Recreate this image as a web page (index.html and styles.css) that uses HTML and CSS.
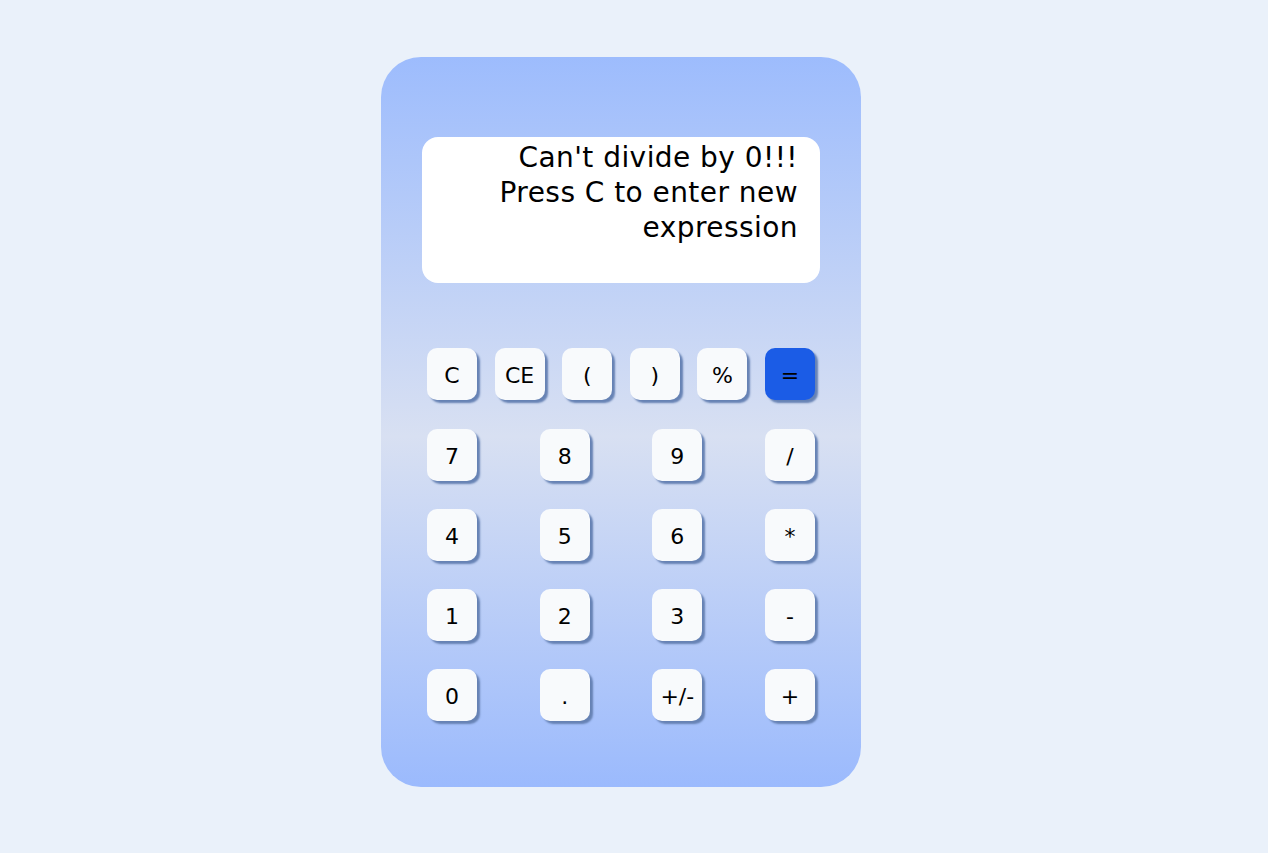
FILE: index.html
```html
<!DOCTYPE html>
<html>
<head>
<meta charset="utf-8">
<link rel="stylesheet" href="styles.css">
</head>
<body>
<div class="calc">
  <div class="display">Can't divide by 0!!!<br>Press C to enter new expression</div>
  <div class="keys">
    <div class="row first">
      <button class="key">C</button>
      <button class="key">CE</button>
      <button class="key">(</button>
      <button class="key">)</button>
      <button class="key">%</button>
      <button class="key eq">=</button>
    </div>
    <div class="row">
      <button class="key">7</button>
      <button class="key">8</button>
      <button class="key">9</button>
      <button class="key">/</button>
    </div>
    <div class="row">
      <button class="key">4</button>
      <button class="key">5</button>
      <button class="key">6</button>
      <button class="key">*</button>
    </div>
    <div class="row">
      <button class="key">1</button>
      <button class="key">2</button>
      <button class="key">3</button>
      <button class="key">-</button>
    </div>
    <div class="row">
      <button class="key">0</button>
      <button class="key">.</button>
      <button class="key">+/-</button>
      <button class="key">+</button>
    </div>
  </div>
</div>
</body>
</html>
```

FILE: styles.css
```css
html, body {
  margin: 0;
  padding: 0;
  background: #eaf1fa;
  font-family: "DejaVu Sans", "Liberation Sans", sans-serif;
}
body {
  padding-top: 57px;
  padding-left: 381px;
  height: 853px;
  box-sizing: border-box;
}
.calc {
  width: 480px;
  height: 730px;
  border-radius: 40px;
  background: linear-gradient(180deg, #9dbcfd 0%, #d8e0f2 52%, #9bbafd 100%);
  padding: 80px 41px 0 41px;
  box-sizing: border-box;
  display: flex;
  flex-direction: column;
}
.display {
  background: #ffffff;
  height: 146px;
  border-radius: 16px;
  box-sizing: border-box;
  padding: 3px 22px 0 22px;
  text-align: right;
  font-size: 28px;
  line-height: 35px;
  color: #000;
  letter-spacing: 0.45px;
}
.keys {
  margin-top: 65px;
  padding: 0 5px;
  display: flex;
  flex-direction: column;
  gap: 28px;
}
.row {
  display: flex;
  justify-content: space-between;
}
.row.first {
  margin-bottom: 1px;
}
.key {
  width: 50px;
  height: 52px;
  border: none;
  border-radius: 10px;
  background: #f8fafc;
  box-shadow: 3px 3px 2px #6682b4;
  font-family: "DejaVu Sans", "Liberation Sans", sans-serif;
  font-size: 22px;
  color: #000;
  padding: 2px 0 0 0;
  display: flex;
  align-items: center;
  justify-content: center;
}
.key.eq {
  background: #1b5ce6;
}
```
